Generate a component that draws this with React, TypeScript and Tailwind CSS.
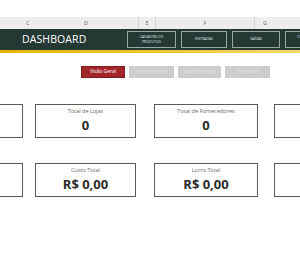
import React from "react";

const navButtons = [
  { label: ["CADASTRO DE", "PRODUTOS"], w: "w-[49px]" },
  { label: ["ENTRADAS"], w: "w-[46px]" },
  { label: ["SAÍDAS"], w: "w-[48px]" },
  { label: ["CONSULTA DE", "ESTOQUE"], w: "w-[48px]" },
];

const tabs = [
  { label: "Visão Geral", active: true, w: "w-[44px]" },
  { label: "Faturamento", active: false, w: "w-[45px]" },
  { label: "Saldo Estoque", active: false, w: "w-[43px]" },
  { label: "Produtos", active: false, w: "w-[45px]" },
];

function Card({ title, value, cls }: { title: string; value: string; cls: string }) {
  return (
    <div
      className={`${cls} h-[34px] shrink-0 border border-[#5a5a5a] bg-white flex flex-col items-center`}
    >
      <span className="mt-[3px] text-[5.5px] leading-[7px] text-[#666]">{title}</span>
      <span className="mt-[3px] text-[13px] leading-[15px] font-bold text-[#2b2b2b]">
        {value}
      </span>
    </div>
  );
}

function App() {
  return (
    <div
      className="w-[300px] h-[269px] overflow-hidden bg-white"
      style={{ fontFamily: '"Open Sans", "Liberation Sans", sans-serif' }}
    >
      <div className="h-[17px]" />

      {/* column letters */}
      <div className="h-[12px] bg-[#ededed] flex text-[5.5px] text-[#666] leading-[12px]">
        <div className="w-[56px] shrink-0 text-center">C</div>
        <div className="w-[83px] shrink-0 text-center pr-[22px] border-r border-[#d6d6d6]">D</div>
        <div className="w-[17px] shrink-0 text-center border-r border-[#d6d6d6]">E</div>
        <div className="w-[99px] shrink-0 text-center border-r border-[#d6d6d6]">F</div>
        <div className="w-[20px] shrink-0 text-center">G</div>
      </div>

      {/* header bar */}
      <div className="h-[21px] bg-[#243834] flex items-center">
        <div className="w-[127px] shrink-0 pl-[22px] text-[10.5px] text-white tracking-[0.1px]">
          DASHBOARD
        </div>
        <div className="flex gap-[5px] shrink-0">
          {navButtons.map((b) => (
            <div
              key={b.label[0]}
              className={`${b.w} h-[17px] shrink-0 border border-[#9aa8a4] flex flex-col items-center justify-center text-[3.6px] leading-[4.5px] text-[#dfe6e4]`}
            >
              {b.label.map((l) => (
                <span key={l}>{l}</span>
              ))}
            </div>
          ))}
        </div>
      </div>
      <div className="h-[3px] bg-gradient-to-r from-[#e5b400] via-[#edc42a] to-[#f2d96b]" />

      {/* tabs */}
      <div className="mt-[13px] flex gap-[4px] pl-[81px]">
        {tabs.map((t) => (
          <div
            key={t.label}
            className={`${t.w} h-[12px] shrink-0 flex items-center justify-center text-[5px] ${
              t.active
                ? "bg-[#a3262a] text-white border border-[#7d1d20]"
                : "bg-[#cdcdcd] text-[#e6e6e6]"
            }`}
          >
            {t.label}
          </div>
        ))}
      </div>

      {/* cards row 1 */}
      <div className="mt-[26px] flex -ml-[77px]">
        <Card title="" value="" cls="w-[100px]" />
        <Card title="Total de Lojas" value="0" cls="w-[101px] ml-[12px]" />
        <Card title="Total de Fornecedores" value="0" cls="w-[104px] ml-[18px]" />
        <Card title="Qtd. de Produtos" value="0" cls="w-[100px] ml-[16px]" />
      </div>

      {/* cards row 2 */}
      <div className="mt-[25px] flex -ml-[77px]">
        <Card title="" value="" cls="w-[100px]" />
        <Card title="Custo Total" value="R$ 0,00" cls="w-[101px] ml-[12px]" />
        <Card title="Lucro Total" value="R$ 0,00" cls="w-[104px] ml-[18px]" />
        <Card title="" value="" cls="w-[100px] ml-[16px]" />
      </div>
    </div>
  );
}

export default App;
